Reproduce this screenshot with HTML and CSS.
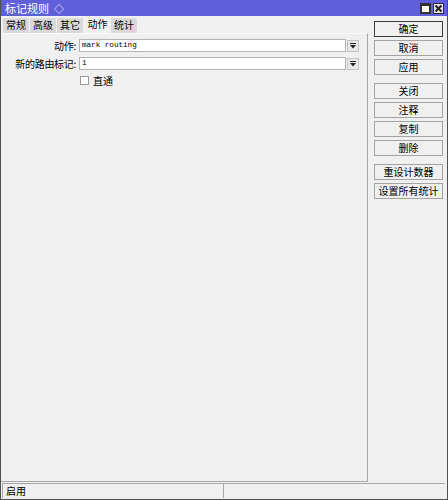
FILE: index.html
```html
<!DOCTYPE html>
<html lang="zh-cn">
<head>
	<meta charset="utf-8"/>
	<title>标记规则</title>
	<link rel="stylesheet" href="styles.css">
</head>

<body>
	<div class="window">
		<div class="titlebar">
			<span class="title">标记规则</span>
			<span class="diamond">◇</span>
			<span class="winbtns">
				<span class="winbtn">
					<svg width="9" height="9" viewBox="0 0 9 9"><rect x="0.5" y="0.5" width="8" height="8" fill="#fff" stroke="#333"/><rect x="0.5" y="0.5" width="8" height="1.5" fill="#333"/></svg>
				</span>
				<span class="winbtn">
					<svg width="9" height="9" viewBox="0 0 9 9"><path d="M1.5 1.5 L7.5 7.5 M7.5 1.5 L1.5 7.5" stroke="#222" stroke-width="2"/></svg>
				</span>
			</span>
		</div>

		<div class="body">
			<div class="main">
				<div class="tabs">
					<span class="tab">常规</span>
					<span class="tab">高级</span>
					<span class="tab">其它</span>
					<span class="tab active">动作</span>
					<span class="tab">统计</span>
				</div>
				<div class="panel">
					<div class="row">
						<label class="lbl">动作:</label>
						<div class="field">mark routing</div>
						<span class="drop"><svg width="6" height="6" viewBox="0 0 6 6"><rect x="0" y="0" width="6" height="1" fill="#222"/><polygon points="0,2 6,2 3,5.5" fill="#222"/></svg></span>
					</div>
					<div class="row">
						<label class="lbl">新的路由标记:</label>
						<div class="field">1</div>
						<span class="drop"><svg width="6" height="6" viewBox="0 0 6 6"><rect x="0" y="0" width="6" height="1" fill="#222"/><polygon points="0,2 6,2 3,5.5" fill="#222"/></svg></span>
					</div>
					<div class="check-row">
						<span class="checkbox"></span>
						<span>直通</span>
					</div>
				</div>
			</div>

			<div class="side">
				<div class="group">
					<div class="btn default">确定</div>
					<div class="btn">取消</div>
					<div class="btn">应用</div>
				</div>
				<div class="group">
					<div class="btn">关闭</div>
					<div class="btn">注释</div>
					<div class="btn">复制</div>
					<div class="btn">删除</div>
				</div>
				<div class="group">
					<div class="btn">重设计数器</div>
					<div class="btn">设置所有统计</div>
				</div>
			</div>
		</div>

		<div class="status">
			<div class="cell first">启用</div>
			<div class="cell"></div>
		</div>
	</div>
</body>
</html>
```

FILE: styles.css
```css
* {
	box-sizing: border-box;
}
body {
	margin: 0;
	font-family: "Noto Sans CJK SC", "Liberation Sans", sans-serif;
	font-size: 10px;
	color: #000;
	background: #f0f0f0;
}
.window {
	width: 448px;
	height: 500px;
	display: flex;
	flex-direction: column;
	border: 1px solid #505050;
	border-top: 0;
	background: #f0f0f0;
}

/* title bar */
.titlebar {
	height: 16px;
	background: #5f5fd9;
	color: #fff;
	display: flex;
	align-items: center;
	padding: 0 3px 0 4px;
	font-size: 11px;
}
.diamond {
	margin-left: 5px;
	font-size: 10px;
}
.winbtns {
	margin-left: auto;
	display: flex;
	gap: 2px;
}
.winbtn {
	width: 11px;
	height: 11px;
	background: #e4e4e4;
	border: 1px solid #303030;
	display: flex;
	align-items: center;
	justify-content: center;
}

/* body */
.body {
	flex: 1;
	display: flex;
	min-height: 0;
}
.main {
	width: 367px;
	display: flex;
	flex-direction: column;
}
.tabs {
	height: 17px;
	display: flex;
	align-items: flex-end;
	padding-left: 2px;
}
.tab {
	width: 27px;
	height: 15px;
	line-height: 14px;
	text-align: center;
	background: #d9d9d9;
	border-right: 1px solid #f4f4f4;
}
.tab.active {
	height: 16px;
	background: #f0f0f0;
	border-right: 0;
}
.panel {
	flex: 1;
	border-top: 1px solid #fafafa;
	border-right: 1px solid #a8a8a8;
	border-bottom: 1px solid #a8a8a8;
	padding-top: 5px;
}
.row {
	display: flex;
	align-items: center;
	height: 13px;
	margin-bottom: 5px;
}
.lbl {
	width: 78px;
	padding-right: 3px;
	text-align: right;
	white-space: nowrap;
	letter-spacing: -0.3px;
}
.field {
	width: 267px;
	height: 13px;
	background: #fff;
	border: 1px solid #b4b4b4;
	font-family: "Liberation Mono", monospace;
	font-size: 7.6px;
	line-height: 11px;
	padding-left: 2px;
}
.drop {
	width: 12px;
	height: 12px;
	margin-left: 1px;
	background: #e8e8e8;
	border: 1px solid #c4c4c4;
	display: flex;
	align-items: center;
	justify-content: center;
}
.check-row {
	display: flex;
	align-items: center;
	gap: 4px;
	margin-top: 3px;
	padding-left: 79px;
	height: 10px;
}
.checkbox {
	width: 9px;
	height: 9px;
	background: #fff;
	border: 1px solid #9a9a9a;
}

/* side buttons */
.side {
	flex: 1;
	padding: 5px 0 0 6px;
}
.group {
	display: flex;
	flex-direction: column;
	gap: 3px;
	margin-bottom: 8px;
}
.btn {
	width: 69px;
	height: 16px;
	line-height: 14px;
	text-align: center;
	border: 1px solid #a4a4a4;
	background: #f0f0f0;
}
.btn.default {
	border-color: #3c3c3c;
}

/* status bar */
.status {
	height: 17px;
	display: flex;
	padding: 1px 2px 1px 1px;
}
.cell {
	flex: 1;
	border-top: 1px solid #a8a8a8;
	border-left: 1px solid #a8a8a8;
	padding-left: 3px;
	line-height: 14px;
}
.cell.first {
	flex: 0 0 221px;
}
```
